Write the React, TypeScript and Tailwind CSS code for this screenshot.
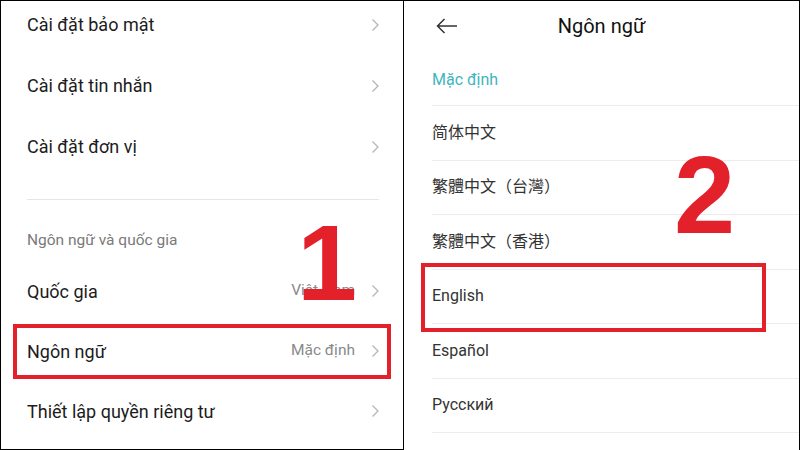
import React from "react";

const Chevron = () => (
  <svg width="9" height="14" viewBox="0 0 9 14" className="mr-[-3px] shrink-0">
    <path d="M1.5 1.5 L7 7 L1.5 12.5" fill="none" stroke="#b5b5b5" strokeWidth="1.3" />
  </svg>
);

const LeftRow = ({ label, value, h = "h-[61px]" }: { label: string; value?: string; h?: string }) => (
  <div className={`flex items-center justify-between ${h}`}>
    <span className="text-[18px] text-[#1c1c1c]">{label}</span>
    <div className="flex items-center gap-[16px]">
      {value && <span className="text-[15.5px] text-[#8a8a8a]">{value}</span>}
      <Chevron />
    </div>
  </div>
);

const RightRow = ({ label, cjk }: { label: string; cjk?: string }) => (
  <div className="flex h-[54.5px] items-center border-b border-[#ececec]">
    <span
      className="text-[16px] text-[#333333]"
      style={cjk ? { fontFamily: `Roboto, "${cjk}", sans-serif` } : undefined}
    >
      {label}
    </span>
  </div>
);

export default function App() {
  return (
    <div
      className="relative flex h-[450px] w-[800px] overflow-hidden bg-white"
      style={{ fontFamily: 'Roboto, "Noto Sans", sans-serif' }}
    >
      {/* Left panel */}
      <div className="relative h-[450px] w-[404px] border-x border-y border-black">
        <div className="-mt-[7px] px-[26px]">
          <LeftRow label="Cài đặt bảo mật" />
          <LeftRow label="Cài đặt tin nhắn" />
          <LeftRow label="Cài đặt đơn vị" />
          <div className="mt-[22px] mr-[-2px] h-px bg-[#e6e6e6]" />
          <div className="flex h-[61px] items-center pt-[20px]">
            <span className="text-[15.5px] text-[#7a7a7a]">Ngôn ngữ và quốc gia</span>
          </div>
          <LeftRow label="Quốc gia" value="Việt Nam" h="h-[60px]" />
          <LeftRow label="Ngôn ngữ" value="Mặc định" h="h-[60px]" />
          <LeftRow label="Thiết lập quyền riêng tư" h="h-[60px]" />
        </div>
        <div className="absolute left-[12px] top-[323px] h-[55px] w-[378px] border-[4px] border-[#e3212b]" />
        <div
          className="absolute left-[296px] top-[208px] text-[108px] font-bold leading-none text-[#e3212b]"
          style={{ fontFamily: '"Liberation Sans", Arial, sans-serif' }}
        >
          1
        </div>
      </div>

      {/* Right panel */}
      <div className="relative h-[450px] flex-1 border-r border-t border-black">
        <div className="relative flex h-[49px] items-center justify-center">
          <svg
            width="22"
            height="16"
            viewBox="0 0 22 16"
            className="absolute left-[32px] top-[17px]"
          >
            <path d="M21 8 H1.5 M8.5 1 L1.5 8 L8.5 15" fill="none" stroke="#333" strokeWidth="1.5" />
          </svg>
          <span className="text-[20px] text-[#111]">Ngôn ngữ</span>
        </div>
        <div className="ml-[28px]">
          <div className="flex h-[56px] items-center border-b border-[#ececec] pt-[4px]">
            <span className="text-[16px] text-[#3fb5be]">Mặc định</span>
          </div>
          <RightRow label="简体中文" cjk="Noto Sans CJK SC" />
          <RightRow label="繁體中文（台灣）" cjk="Noto Sans CJK TC" />
          <RightRow label="繁體中文（香港）" cjk="Noto Sans CJK TC" />
          <RightRow label="English" />
          <RightRow label="Español" />
          <RightRow label="Русский" />
        </div>
        <div className="absolute left-[17px] top-[262px] h-[69px] w-[345px] border-[4px] border-[#e3212b]" />
        <div
          className="absolute left-[270px] top-[139px] text-[110px] font-bold leading-none text-[#e3212b]"
          style={{ fontFamily: '"Liberation Sans", Arial, sans-serif' }}
        >
          2
        </div>
      </div>
    </div>
  );
}
